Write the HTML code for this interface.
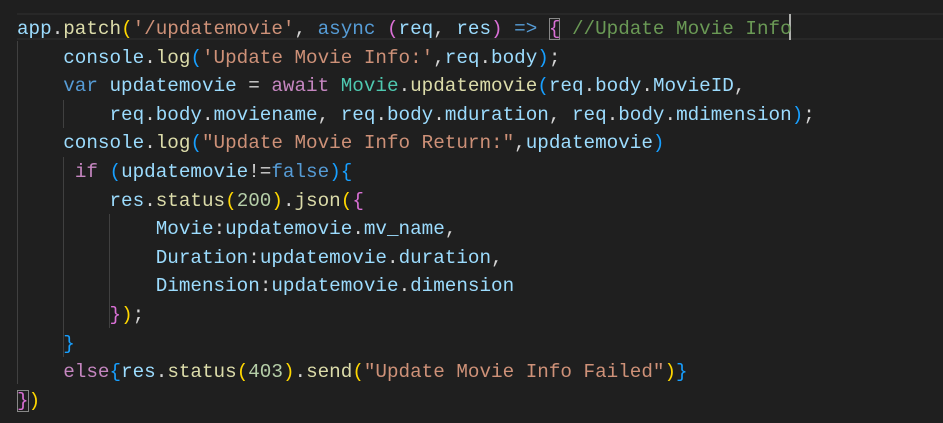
<!DOCTYPE html>
<html><head><meta charset="utf-8"><style>
html,body{margin:0;padding:0;background:#1f1f1f;width:943px;height:423px;overflow:hidden}
.c{position:absolute;left:17px;top:15px;font-family:"Liberation Mono",monospace;font-size:19.28px;line-height:28.6px;color:#d4d4d4;white-space:pre}
.l{height:28.6px}
.v{color:#9cdcfe}.f{color:#dcdcaa}.s{color:#ce9178}.k{color:#569cd6}.p{color:#c586c0}.t{color:#4ec9b0}.cm{color:#6a9955}.n{color:#b5cea8}
.b1{color:#ffd700}.b2{color:#da70d6}.b3{color:#179fff}
.hl{position:absolute;left:17px;right:0;top:13px;height:27px;border-top:2px solid #282828;border-bottom:2px solid #282828;box-sizing:border-box}
.g{position:absolute;width:1px;background:#404040}
.box{outline:1px solid #888;outline-offset:-1px}
.cur{position:absolute;left:789px;top:14px;width:2px;height:26px;background:#aeafad}
</style></head><body>
<div class="hl"></div>
<div class="g" style="left:17px;top:41px;height:343px"></div>
<div class="g" style="left:63px;top:100px;height:28px"></div>
<div class="g" style="left:63px;top:157px;height:200px"></div>
<div class="g" style="left:109px;top:214px;height:114px"></div>
<div class="cur"></div>
<div class="c"><div class="l"><span class="v">app</span>.<span class="f">patch</span><span class="b1">(</span><span class="s">'/updatemovie'</span>, <span class="k">async</span> <span class="b2">(</span><span class="v">req</span>, <span class="v">res</span><span class="b2">)</span> <span class="k">=&gt;</span> <span class="b2 box">{</span> <span class="cm">//Update Movie Info</span></div><div class="l">    <span class="v">console</span>.<span class="f">log</span><span class="b3">(</span><span class="s">'Update Movie Info:'</span>,<span class="v">req</span>.<span class="v">body</span><span class="b3">)</span>;</div><div class="l">    <span class="k">var</span> <span class="v">updatemovie</span> = <span class="p">await</span> <span class="t">Movie</span>.<span class="f">updatemovie</span><span class="b3">(</span><span class="v">req</span>.<span class="v">body</span>.<span class="v">MovieID</span>,</div><div class="l">        <span class="v">req</span>.<span class="v">body</span>.<span class="v">moviename</span>, <span class="v">req</span>.<span class="v">body</span>.<span class="v">mduration</span>, <span class="v">req</span>.<span class="v">body</span>.<span class="v">mdimension</span><span class="b3">)</span>;</div><div class="l">    <span class="v">console</span>.<span class="f">log</span><span class="b3">(</span><span class="s">"Update Movie Info Return:"</span>,<span class="v">updatemovie</span><span class="b3">)</span></div><div class="l">     <span class="p">if</span> <span class="b3">(</span><span class="v">updatemovie</span>!=<span class="k">false</span><span class="b3">)</span><span class="b3">{</span></div><div class="l">        <span class="v">res</span>.<span class="f">status</span><span class="b1">(</span><span class="n">200</span><span class="b1">)</span>.<span class="f">json</span><span class="b1">(</span><span class="b2">{</span></div><div class="l">            <span class="v">Movie</span>:<span class="v">updatemovie</span>.<span class="v">mv_name</span>,</div><div class="l">            <span class="v">Duration</span>:<span class="v">updatemovie</span>.<span class="v">duration</span>,</div><div class="l">            <span class="v">Dimension</span>:<span class="v">updatemovie</span>.<span class="v">dimension</span></div><div class="l">        <span class="b2">}</span><span class="b1">)</span>;</div><div class="l">    <span class="b3">}</span></div><div class="l">    <span class="p">else</span><span class="b3">{</span><span class="v">res</span>.<span class="f">status</span><span class="b1">(</span><span class="n">403</span><span class="b1">)</span>.<span class="f">send</span><span class="b1">(</span><span class="s">"Update Movie Info Failed"</span><span class="b1">)</span><span class="b3">}</span></div><div class="l"><span class="b2 box">}</span><span class="b1">)</span></div></div>
</body></html>
